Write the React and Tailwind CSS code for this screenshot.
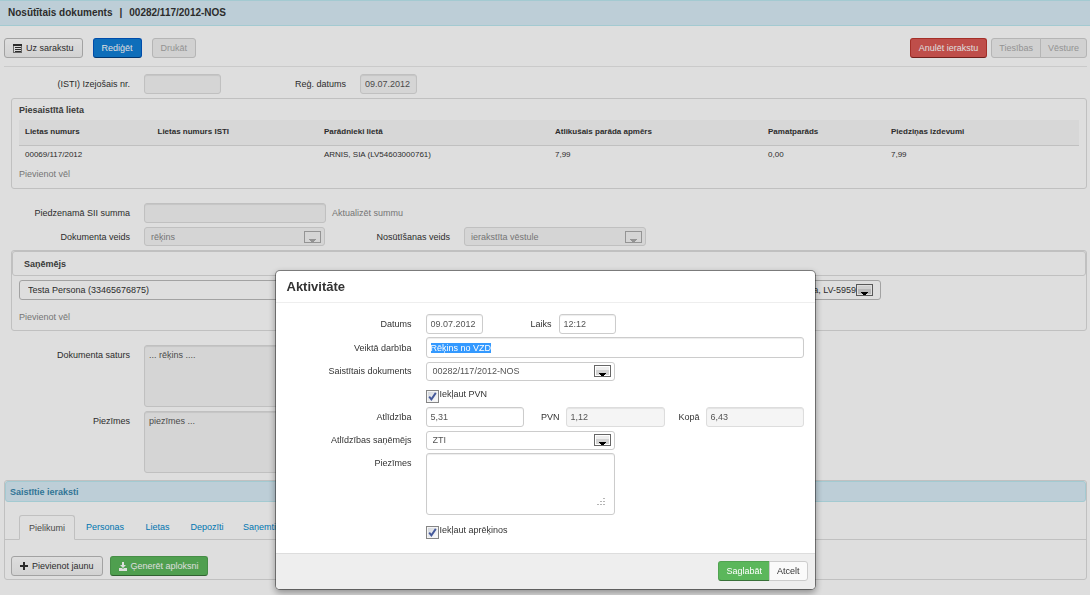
import { useEffect, useRef } from "react";

const field =
  "block rounded-[3px] border border-[#ccc] bg-white px-1 text-[#555] outline-none shadow-[inset_0_1px_1px_rgba(0,0,0,0.075)] disabled:border-[#ddd] disabled:bg-[#f5f5f5]";
const dimField =
  "block rounded-[3px] border border-[#ddd] bg-[#f5f5f5] px-1 text-[#555] outline-none shadow-[inset_0_1px_1px_rgba(0,0,0,0.075)]";
const buttonBase =
  "flex h-5 items-center justify-center gap-1 border whitespace-nowrap";
const button = buttonBase + " px-2";
const groupButton = buttonBase + " px-[7px]";
const plain =
  "rounded-[3px] border-[#bbb] bg-gradient-to-b from-white to-[#f2f2f2] text-[#333]";
const off = "border-[#d0d0d0] bg-[#f0f0f0] text-[#aaa]";
const green = "border-[#51a351] border-b-[#387038] bg-[#5bb75b] text-white";

function ArrowBox({ muted }) {
  return (
    <svg
      width="17"
      height="12"
      viewBox="0 0 17 12"
      aria-hidden="true"
      shapeRendering="crispEdges"
      className={
        "pointer-events-none absolute top-1/2 right-1 -translate-y-1/2 " +
        (muted ? "text-[#aaa]" : "text-black")
      }
    >
      <rect
        x="0.5"
        y="0.5"
        width="16"
        height="11"
        fill={muted ? "#f5f5f5" : "#fff"}
        stroke={muted ? "#aaa" : "#666"}
      />
      {!muted && <rect x="2" y="2" width="13" height="4" fill="#eee" />}
      {!muted && <rect x="2" y="5" width="13" height="5" fill="#d4d4d4" />}
      <path d="M5 8h7v1h-1v1h-1v1H7v-1H6V9H5z" fill="currentColor" />
    </svg>
  );
}

function Select({ id, value, disabled, className, tone }) {
  return (
    <div className={"relative " + className}>
      <select
        id={id}
        disabled={disabled}
        className={
          "block h-[19px] w-full appearance-none rounded-[3px] border pr-6 pl-[6px] opacity-100 outline-none " +
          tone
        }
      >
        <option>{value}</option>
      </select>
      <ArrowBox muted={disabled} />
    </div>
  );
}

function Check({ id, label }) {
  return (
    <div className="flex items-start gap-px pl-[150px]">
      <span className="mt-1 grid size-[13px] shrink-0 place-items-center">
        <input
          id={id}
          type="checkbox"
          defaultChecked
          className="col-start-1 row-start-1 size-[13px] appearance-none border border-[#858585] bg-gradient-to-br from-[#cfd3da] to-white shadow-[inset_0_0_0_1px_#f4f4f4]"
        />
        <svg
          width="9"
          height="9"
          viewBox="0 0 9 9"
          aria-hidden="true"
          className="pointer-events-none col-start-1 row-start-1"
        >
          <path
            d="M1.2 4.6 3.4 7.4 7.8 0.9"
            fill="none"
            stroke="#45599a"
            strokeWidth="1.9"
          />
        </svg>
      </span>
      <label htmlFor={id} className="leading-4">
        {label}
      </label>
    </div>
  );
}

const label = "w-[130px] shrink-0 text-right mr-[14px]";
const label2 = "w-[125px] shrink-0 text-right mr-[14px]";
const modalLabel = "w-[136px] shrink-0 text-right mr-[14px]";

const columns = [
  ["Lietas numurs", "00069/117/2012", "w-[12.5%]"],
  ["Lietas numurs ISTI", "", "w-[15.7%]"],
  ["Parādnieki lietā", "ARNIS, SIA (LV54603000761)", "w-[21.8%]"],
  ["Atlikušais parāda apmērs", "7,99", "w-[20.1%]"],
  ["Pamatparāds", "0,00", "w-[11.6%]"],
  ["Piedziņas izdevumi", "7,99", "w-[18.3%]"],
];

function Page() {
  return (
    <div>
      <header className="flex h-[26px] items-center border-y border-[#bce8f1] bg-[#d9edf7] px-2">
        <h1 className="flex gap-[7px] text-[10px] font-bold">
          <span>Nosūtītais dokuments</span>
          <span>|</span>
          <span>00282/117/2012-NOS</span>
        </h1>
      </header>

      <div className="mr-[3px] ml-1 flex items-center border-b border-[#e8e8e8] pt-3 pb-2">
        <button className={button + " mr-[10px] " + plain}>
          <svg width="9" height="9" viewBox="0 0 9 9" aria-hidden="true" shapeRendering="crispEdges">
            <path d="M0 0h9v9H0zM1 2v6h7V2z" fill="#777" fillRule="evenodd" />
            <path d="M0 0h9v2H0zM2 3h6v1H2zM2 5h6v1H2zM2 7h6v1H2z" fill="#333" />
          </svg>
          Uz sarakstu
        </button>
        <button className={button + " mr-[10px] rounded-[3px] border-[#0058c4] border-b-[#003f81] bg-[#117fd6] text-white"}>
          Rediģēt
        </button>
        <button disabled className={button + " rounded-[3px] " + off}>Drukāt</button>
        <button className={button + " ml-auto rounded-[3px] border-[#bd362f] border-b-[#802420] bg-[#dc5a55] text-white"}>
          Anulēt ierakstu
        </button>
        <div className="ml-1 flex">
          <button disabled className={groupButton + " rounded-l-[3px] " + off}>Tiesības</button>
          <button disabled className={groupButton + " -ml-px rounded-r-[3px] " + off}>Vēsture</button>
        </div>
      </div>

      <div className="mt-[7px] flex items-center">
        <label htmlFor="nr" className={label}>(ISTI) Izejošais nr.</label>
        <input id="nr" disabled className={dimField + " h-5 w-[77px]"} />
        <label htmlFor="reg" className={label2}>Reģ. datums</label>
        <input id="reg" disabled defaultValue="09.07.2012" className={dimField + " h-5 w-[57px]"} />
      </div>

      <section className="mt-1 mr-[3px] ml-[11px] rounded-[3px] border border-[#ddd] px-[7px] pt-[5px] pb-2">
        <h2 className="font-bold text-[#444]">Piesaistītā lieta</h2>
        <table className="mt-1 w-full table-fixed text-left text-[8px]">
          <thead>
            <tr className="h-[25px] border-b border-[#ddd] bg-[#f7f7f7]">
              {columns.map(([head, , width]) => (
                <th key={head} className={"px-[6px] font-bold whitespace-nowrap " + width}>{head}</th>
              ))}
            </tr>
          </thead>
          <tbody>
            <tr className="h-5">
              {columns.map(([head, cell]) => (
                <td key={head} className="px-[6px] whitespace-nowrap">{cell}</td>
              ))}
            </tr>
          </tbody>
        </table>
        <a href="#more-cases" className="mt-[3px] block text-[#888]">Pievienot vēl</a>
      </section>

      <div className="mt-[14px] flex items-center">
        <label htmlFor="sum" className={label}>Piedzenamā SII summa</label>
        <input id="sum" disabled className={dimField + " h-5 w-[182px]"} />
        <a href="#refresh" className="ml-[6px] text-[#888]">Aktualizēt summu</a>
      </div>
      <div className="mt-1 flex items-center">
        <label htmlFor="kind" className={label}>Dokumenta veids</label>
        <Select id="kind" value="rēķins" disabled className="w-[181px]" tone="border-[#ddd] bg-[#f5f5f5] text-[#888]" />
        <label htmlFor="send" className={label2}>Nosūtīšanas veids</label>
        <Select id="send" value="ierakstīta vēstule" disabled className="w-[182px]" tone="border-[#ddd] bg-[#f5f5f5] text-[#888]" />
      </div>

      <section className="mt-1 mr-[3px] ml-[11px] rounded-[3px] border border-[#ddd] pb-[7px]">
        <h2 className="flex h-[25px] items-center rounded-[3px] border border-[#ddd] px-[11px] font-bold text-[#444]">Saņēmējs</h2>
        <div className="px-[7px] pt-1">
          <div className="relative w-[862px] max-w-full">
            <select
              aria-label="Saņēmējs"
              className="block h-5 w-full appearance-none rounded-[3px] border border-[#bbb] bg-white px-2 outline-none"
            >
              <option>Testa Persona (33465676875)</option>
            </select>
            <span className="pointer-events-none absolute top-1 right-[25px]">Rīga, LV-5959</span>
            <span className="absolute inset-y-0 right-1">
              <ArrowBox />
            </span>
          </div>
          <a href="#more-recipients" className="mt-[11px] block text-[#888]">Pievienot vēl</a>
        </div>
      </section>

      <div className="mt-[14px] flex items-start">
        <label htmlFor="content" className={label + " pt-1"}>Dokumenta saturs</label>
        <textarea id="content" disabled defaultValue="... rēķins ...." className={dimField + " h-[62px] w-[502px] resize-none py-[3px]"} />
      </div>
      <div className="mt-1 flex items-start">
        <label htmlFor="notes" className={label + " pt-1"}>Piezīmes</label>
        <textarea id="notes" disabled defaultValue="piezīmes ..." className={dimField + " h-[62px] w-[502px] resize-none py-[3px]"} />
      </div>

      <section className="mt-[7px] mr-[3px] ml-1 rounded-[3px] border border-[#ddd] pb-[3px]">
        <h2 className="flex h-[21px] items-center rounded-[3px] border border-[#bce8f1] bg-[#d9edf7] px-1 font-bold text-[#3a87ad]">
          Saistītie ieraksti
        </h2>
        <nav className="mt-[13px] flex h-[25px] border-b border-[#ddd] pl-[14px] text-[#0088cc]">
          <a href="#files" className="-mb-px flex w-14 items-center justify-center rounded-t-[3px] border border-[#ddd] border-b-white bg-white text-[#555]">
            Pielikumi
          </a>
          <a href="#people" className="flex w-[60px] items-center justify-center">Personas</a>
          <a href="#cases" className="flex w-[45px] items-center justify-center">Lietas</a>
          <a href="#deposits" className="flex w-[54px] items-center justify-center">Depozīti</a>
          <a href="#received" className="flex items-center px-[9px]">Saņemtie</a>
        </nav>
        <div className="mt-4 flex gap-[7px] pl-[6px]">
          <button className={button + " " + plain}>
            <svg width="8" height="8" viewBox="0 0 8 8" aria-hidden="true" shapeRendering="crispEdges">
              <path d="M3 0h2v3h3v2H5v3H3V5H0V3h3z" fill="#333" />
            </svg>
            Pievienot jaunu
          </button>
          <button className={button + " rounded-[3px] " + green}>
            <svg width="8" height="9" viewBox="0 0 8 9" aria-hidden="true">
              <path d="M3 0h2v3h2L4 6 1 3h2zM0 6h3L4 7 5 6H8v3H0z" fill="#fff" />
            </svg>
            Ģenerēt aploksni
          </button>
        </div>
      </section>
    </div>
  );
}

function ActivityDialog() {
  const action = useRef(null);
  useEffect(() => {
    action.current.focus();
    action.current.select();
  }, []);
  const tone = "border-[#ccc] bg-white text-[#555]";
  return (
    <div
      role="dialog"
      aria-modal="true"
      aria-labelledby="dialog-title"
      className="w-[541px] max-w-full rounded-[5px] border border-black/40 bg-white bg-clip-padding shadow-[0_3px_7px_rgba(0,0,0,0.35)]"
    >
      <div className="flex h-8 items-center border-b border-[#eee] px-[11px]">
        <h2 id="dialog-title" className="text-[13px] font-bold">Aktivitāte</h2>
      </div>
      <div className="flex flex-col gap-[3px] pt-[11px] pr-[11px] pb-[14px]">
        <div className="flex items-center">
          <label htmlFor="date" className={modalLabel}>Datums</label>
          <input id="date" defaultValue="09.07.2012" className={field + " h-5 w-[57px]"} />
          <label htmlFor="time" className="mr-[7px] w-[69px] text-right">Laiks</label>
          <input id="time" defaultValue="12:12" className={field + " h-5 w-[57px]"} />
        </div>
        <div className="flex items-center">
          <label htmlFor="action" className={modalLabel}>Veiktā darbība</label>
          <input
            id="action"
            ref={action}
            defaultValue="Rēķins no VZD"
            className={field + " h-[21px] min-w-0 flex-1 selection:bg-[#3399ff] selection:text-white"}
          />
        </div>
        <div className="flex h-5 items-center">
          <label htmlFor="doc" className={modalLabel}>Saistītais dokuments</label>
          <Select id="doc" value="00282/117/2012-NOS" className="w-[189px]" tone={tone} />
        </div>
        <div className="h-5 pt-[2px]">
          <Check id="vat" label="Iekļaut PVN" />
        </div>
        <div className="flex items-center">
          <label htmlFor="fee" className={modalLabel}>Atlīdzība</label>
          <input id="fee" defaultValue="5,31" className={field + " h-5 w-[98px]"} />
          <label htmlFor="pvn" className="mr-[6px] w-9 shrink-0 text-right">PVN</label>
          <input id="pvn" disabled defaultValue="1,12" className={field + " h-5 w-[99px]"} />
          <label htmlFor="total" className="mr-[6px] w-[35px] shrink-0 text-right">Kopā</label>
          <input id="total" disabled defaultValue="6,43" className={field + " h-5 min-w-0 flex-1"} />
        </div>
        <div className="flex h-5 items-center">
          <label htmlFor="payee" className={modalLabel}>Atlīdzības saņēmējs</label>
          <Select id="payee" value="ZTI" className="w-[189px]" tone={tone} />
        </div>
        <div className="flex items-start">
          <label htmlFor="remarks" className={modalLabel + " pt-1"}>Piezīmes</label>
          <div className="relative">
            <textarea id="remarks" className={field + " h-[62px] w-[189px] resize-none"} />
            <svg
              width="8"
              height="7"
              viewBox="0 0 8 7"
              aria-hidden="true"
              shapeRendering="crispEdges"
              className="pointer-events-none absolute right-[10px] bottom-[10px]"
            >
              <path d="M6 0h2v1H6zM3 3h2v1H3zM6 3h2v1H6zM0 6h2v1H0zM3 6h2v1H3zM6 6h2v1H6z" fill="#b5b5b5" />
            </svg>
          </div>
        </div>
        <div className="pt-1">
          <Check id="calc" label="Iekļaut aprēķinos" />
        </div>
      </div>
      <div className="flex items-start justify-end rounded-b-[4px] border-t border-[#ddd] bg-[#eee] pt-[7px] pr-[7px] pb-2">
        <button className={groupButton + " rounded-l-[3px] " + green}>Saglabāt</button>
        <button className={groupButton + " -ml-px rounded-r-[3px] border-[#ccc] bg-[#fafafa] text-[#333]"}>Atcelt</button>
      </div>
    </div>
  );
}

export default function App() {
  return (
    <main className="relative min-h-screen bg-white font-['Liberation_Sans',Arial,sans-serif] text-[9px] leading-3 text-[#333]">
      <Page />
      <div className="fixed inset-0 flex items-start justify-center bg-black/[13%] pt-[270px]">
        <ActivityDialog />
      </div>
    </main>
  );
}
